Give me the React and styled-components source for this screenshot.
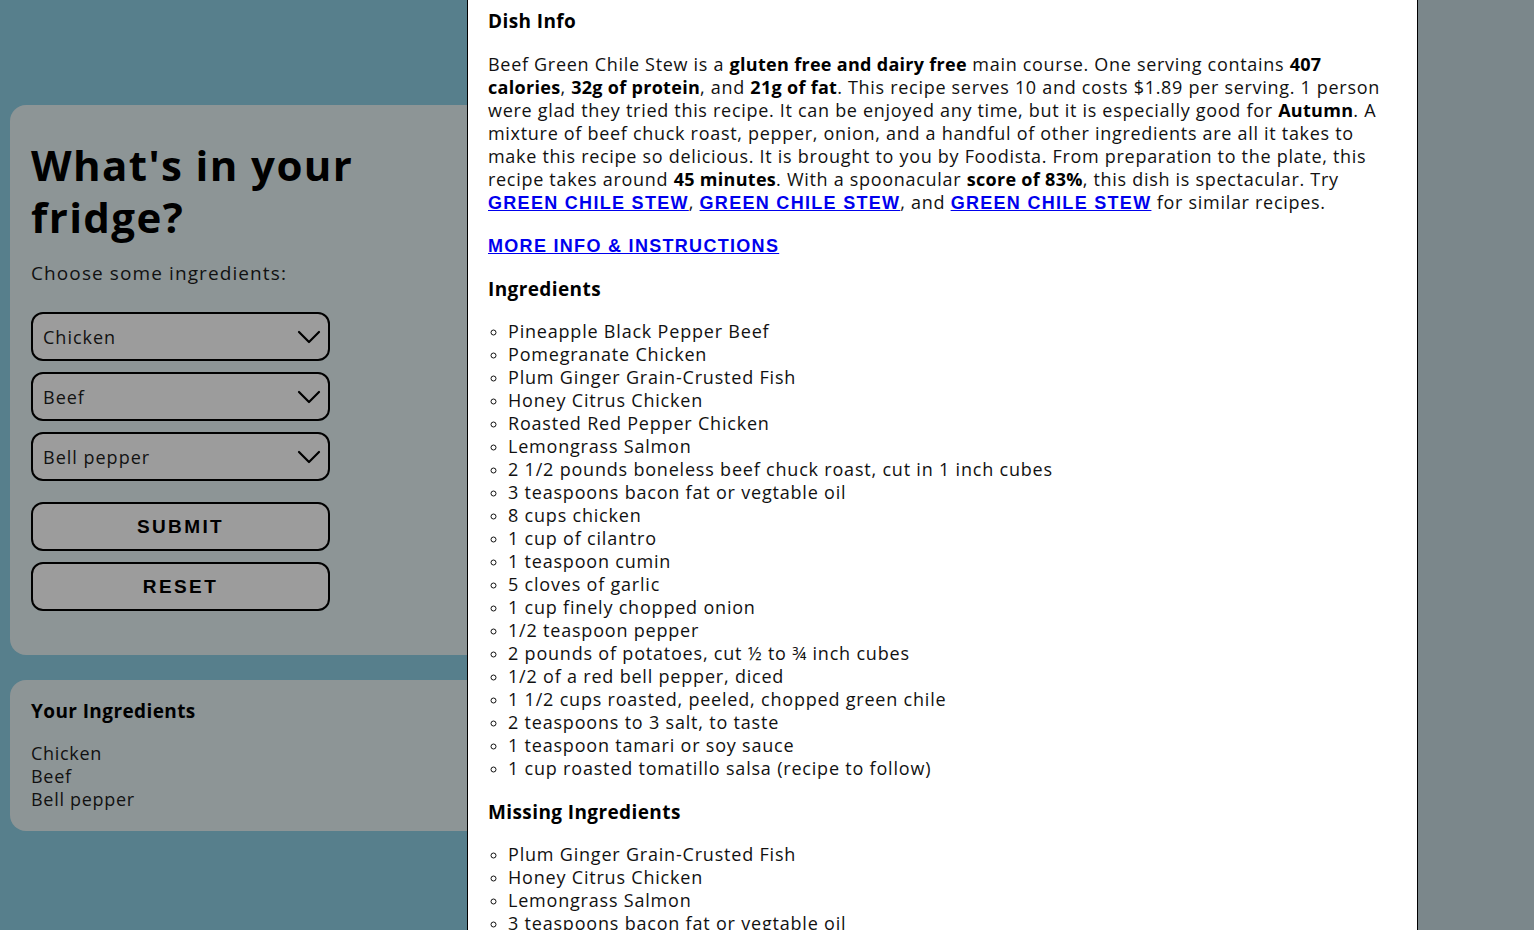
import React from "react";
import styled, { createGlobalStyle } from "styled-components";

const Global = createGlobalStyle`
  html, body { margin: 0; padding: 0; }
  body {
    font-family: "Open Sans", "DejaVu Sans", sans-serif;
    color: #000;
    background: #577f8c;
    overflow: hidden;
  }
`;

const Page = styled.div`
  display: grid;
  grid-template-columns: 940px 1fr;
  height: 930px;
`;

const LeftCol = styled.div`
  display: flex;
  flex-direction: column;
  gap: 25px;
  padding: 105px 0 0 10px;
`;

const RightCol = styled.div`
  background: #7b878b;
`;

const Panel = styled.section`
  background: #8d9596;
  border-radius: 16px;
  padding: ${(p) => p.$pad};
  display: flex;
  flex-direction: column;
`;

const Title = styled.h1`
  margin: 0;
  font-size: 42px;
  line-height: 52px;
  font-weight: 700;
  letter-spacing: 1.4px;
  width: 380px;
`;

const Lead = styled.p`
  margin: 18px 0 27px;
  font-size: 19px;
  line-height: 24px;
  letter-spacing: 1.1px;
  color: #111;
`;

const Field = styled.div`
  width: 299px;
  height: 49px;
  box-sizing: border-box;
  border: 2px solid #000;
  border-radius: 12px;
  background: #9c9c9c;
  display: flex;
  align-items: center;
  justify-content: space-between;
  padding: 0 7px 0 10px;
  margin-bottom: 11px;
  font-size: 18px;
  letter-spacing: 1px;
  color: #111;
`;

const Button = styled.button`
  width: 299px;
  height: 49px;
  box-sizing: border-box;
  border: 2px solid #000;
  border-radius: 12px;
  background: #9c9c9c;
  font-family: "Liberation Sans", Arial, sans-serif;
  font-weight: 700;
  font-size: 19px;
  letter-spacing: 2.4px;
  color: #000;
  margin-top: ${(p) => p.$top}px;
  padding: 0;
`;

const SubHead = styled.h3`
  margin: 0;
  font-size: 19px;
  line-height: 24px;
  font-weight: 700;
  letter-spacing: 0.4px;
`;

const Plain = styled.div`
  margin-top: 19px;
  font-size: 18px;
  line-height: 23px;
  letter-spacing: 0.7px;
  color: #111;
`;

const Modal = styled.div`
  position: fixed;
  top: 0;
  left: 467px;
  width: 951px;
  height: 930px;
  box-sizing: border-box;
  background: #fff;
  border-left: 1px solid #000;
  border-right: 1px solid #000;
  padding: 8px 20px 0 20px;
  overflow: hidden;
`;

const MHead = styled.h2`
  margin: 0 0 ${(p) => p.$after}px;
  font-size: 19px;
  line-height: 26px;
  font-weight: 700;
  letter-spacing: 0.4px;
`;

const Para = styled.p`
  margin: 0 0 ${(p) => p.$after || 19}px;
  font-size: 18px;
  line-height: 23px;
  letter-spacing: 0.7px;
  color: #111;
  b { font-weight: 700; color: #000; letter-spacing: 0.3px; }
`;

const Link = styled.a`
  font-family: "Liberation Sans", Arial, sans-serif;
  font-weight: 700;
  text-transform: uppercase;
  color: #0000ee;
  text-decoration: underline;
  font-size: 18px;
  letter-spacing: 1.3px;
`;

const List = styled.ul`
  list-style: circle;
  margin: 0 0 19px;
  padding-left: 20px;
  font-size: 18px;
  line-height: 23px;
  letter-spacing: 0.8px;
  color: #111;
  li::marker { font-size: 14px; }
`;

const Chevron = () => (
  <svg width="24" height="14" viewBox="0 0 24 14" fill="none">
    <polyline points="2,2 12,12 22,2" stroke="#000" strokeWidth="2.2" strokeLinecap="round" strokeLinejoin="round" />
  </svg>
);

const ingredients = [
  "Pineapple Black Pepper Beef",
  "Pomegranate Chicken",
  "Plum Ginger Grain-Crusted Fish",
  "Honey Citrus Chicken",
  "Roasted Red Pepper Chicken",
  "Lemongrass Salmon",
  "2 1/2 pounds boneless beef chuck roast, cut in 1 inch cubes",
  "3 teaspoons bacon fat or vegtable oil",
  "8 cups chicken",
  "1 cup of cilantro",
  "1 teaspoon cumin",
  "5 cloves of garlic",
  "1 cup finely chopped onion",
  "1/2 teaspoon pepper",
  "2 pounds of potatoes, cut ½ to ¾ inch cubes",
  "1/2 of a red bell pepper, diced",
  "1 1/2 cups roasted, peeled, chopped green chile",
  "2 teaspoons to 3 salt, to taste",
  "1 teaspoon tamari or soy sauce",
  "1 cup roasted tomatillo salsa (recipe to follow)",
];

const missing = [
  "Plum Ginger Grain-Crusted Fish",
  "Honey Citrus Chicken",
  "Lemongrass Salmon",
  "3 teaspoons bacon fat or vegtable oil",
  "8 cups chicken",
  "1 cup of cilantro",
];

export default function App() {
  return (
    <>
      <Global />
      <Page>
        <LeftCol>
          <Panel $pad="34px 20px 44px 21px">
            <Title>What's in your fridge?</Title>
            <Lead>Choose some ingredients:</Lead>
            {["Chicken", "Beef", "Bell pepper"].map((x) => (
              <Field key={x}>
                <span>{x}</span>
                <Chevron />
              </Field>
            ))}
            <Button $top={10}>SUBMIT</Button>
            <Button $top={11}>RESET</Button>
          </Panel>
          <Panel $pad="19px 20px 20px 21px">
            <SubHead>Your Ingredients</SubHead>
            <Plain>
              Chicken<br />Beef<br />Bell pepper
            </Plain>
          </Panel>
        </LeftCol>
        <RightCol />
      </Page>
      <Modal>
        <MHead $after={19}>Dish Info</MHead>
        <Para>
          Beef Green Chile Stew is a <b>gluten free and dairy free</b> main course. One serving contains <b>407 calories</b>, <b>32g of protein</b>, and <b>21g of fat</b>. This recipe serves 10 and costs $1.89 per serving. 1 person were glad they tried this recipe. It can be enjoyed any time, but it is especially good for <b>Autumn</b>. A mixture of beef chuck roast, pepper, onion, and a handful of other ingredients are all it takes to make this recipe so delicious. It is brought to you by Foodista. From preparation to the plate, this recipe takes around <b>45 minutes</b>. With a spoonacular <b>score of 83%</b>, this dish is spectacular. Try <Link href="#">green chile stew</Link>, <Link href="#">green chile stew</Link>, and <Link href="#">green chile stew</Link> for similar recipes.
        </Para>
        <Para $after={18}>
          <Link href="#">More info &amp; instructions</Link>
        </Para>
        <MHead $after={18}>Ingredients</MHead>
        <List>
          {ingredients.map((x, i) => <li key={i}>{x}</li>)}
        </List>
        <MHead $after={18}>Missing Ingredients</MHead>
        <List>
          {missing.map((x, i) => <li key={i}>{x}</li>)}
        </List>
      </Modal>
    </>
  );
}
